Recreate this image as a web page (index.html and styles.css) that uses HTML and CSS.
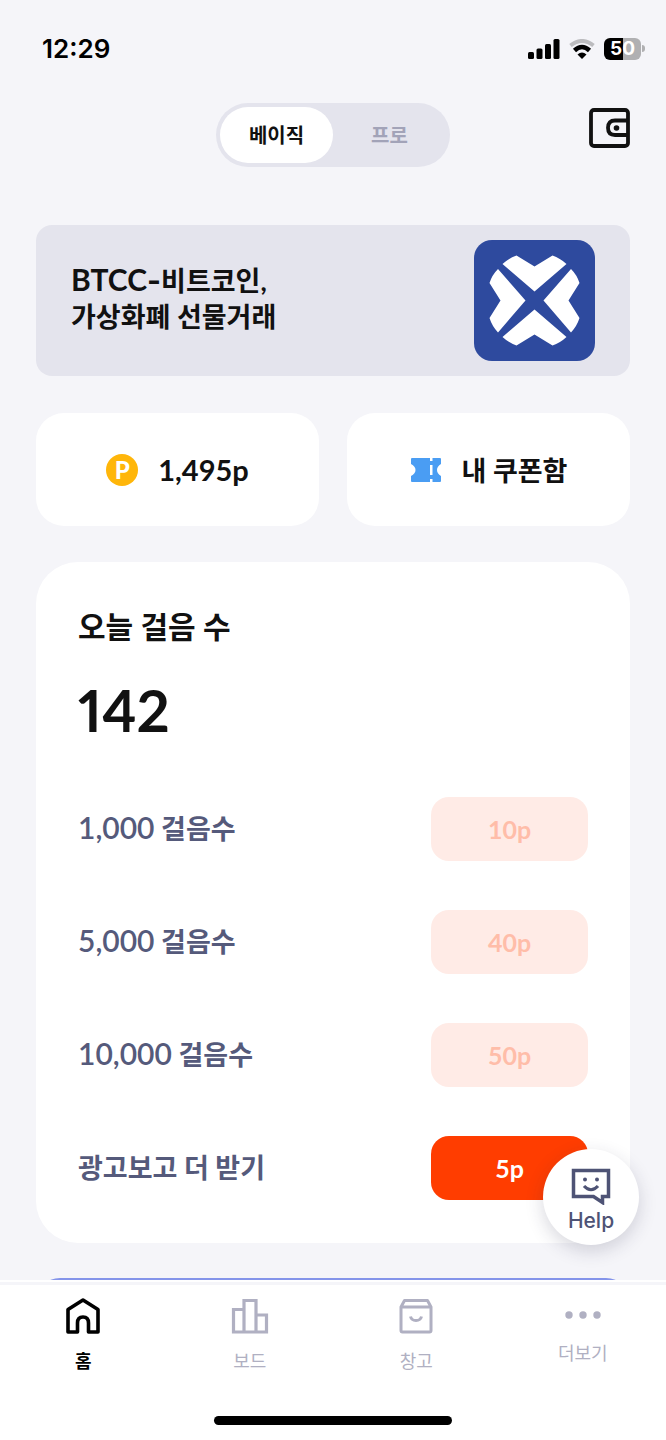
FILE: index.html
```html
<!DOCTYPE html>
<html lang="ko">
<head>
<meta charset="utf-8">
<meta name="viewport" content="width=device-width, initial-scale=1">
<title>홈</title>
<link rel="stylesheet" href="styles.css">
</head>
<body>
<div class="app">
  <div class="status">
    <time class="clock">12:29</time>
    <div class="status-icons">
      <svg width="32" height="20" viewBox="0 0 32 20"><rect x="0" y="13" width="6" height="7" rx="1.5"/><rect x="8.500" y="9.500" width="6" height="10.500" rx="1.500"/><rect x="17" y="5" width="6" height="15" rx="1.500"/><rect x="25.500" y="0" width="6" height="20" rx="1.500"/></svg>
      <svg width="26" height="20" viewBox="0 0 26 20" fill="none"><path d="M1.500 6.500Q13-2.500 24.500 6.500" stroke="#bcbcbf" stroke-width="4"/><path d="M5.500 11.500Q13 4.500 20.500 11.500" stroke="#000" stroke-width="4.500"/><path d="M8.500 15.500Q13 11.500 17.500 15.500L13 20Z" fill="#000"/></svg>
      <div class="battery"><span class="cell">50</span><span class="tip"></span></div>
    </div>
  </div>

  <main class="content">
    <header class="header">
      <div class="toggle">
        <button class="toggle-item active" type="button">베이직</button>
        <button class="toggle-item" type="button">프로</button>
      </div>
      <button class="wallet" type="button" aria-label="지갑">
        <svg width="41" height="40" viewBox="0 0 41 40" fill="none" stroke="#111" stroke-width="3.800"><rect x="2" y="2" width="37" height="36" rx="3"/><path d="M39 12.500H26q-7 0-7 7.250t7 7.250h13"/><circle cx="27.500" cy="20" r="2.800" fill="#111" stroke="none"/></svg>
      </button>
    </header>

    <a class="banner" href="#">
      <span class="banner-text"><span class="brand">BTCC</span><span class="dash">-</span>비트코인,<br>가상화폐 선물거래</span>
      <svg class="banner-logo" width="121" height="121" viewBox="0 0 121 121"><rect width="121" height="121" rx="18" fill="#2e4a9e"/><g fill="#fff"><path d="M28.500 24Q35 18 42.500 15.500L60.500 26.500 78.500 15.500Q86 18 92.500 24L60.500 51.500Z"/><path d="M28.500 97Q35 103 42.500 105.500L60.500 94.500 78.500 105.500Q86 103 92.500 97L60.500 69.500Z"/><path d="M24 29Q18 35 15.500 43L26.500 60.500 15.500 78Q18 86 24 92.500L51.500 60.500Z"/><path d="M97 29Q103 35 105.500 43L94.500 60.500 105.500 78Q103 86 97 92.500L69.500 60.500Z"/></g></svg>
    </a>

    <div class="tiles">
      <a class="tile" href="#"><span class="coin">P</span><span class="points">1,495p</span></a>
      <a class="tile" href="#">
        <svg width="32" height="32" viewBox="0 0 32 32"><path fill="#4a9df3" fill-rule="evenodd" d="M2 4H20V7H22.500V4H30Q31 4 31 5V10Q27 12.500 27 16T31 22V27Q31 28 30 28H22.500V25H20V28H2Q1 28 1 27V22Q5.500 19.500 5.500 16T1 10V5Q1 4 2 4ZM20 11V21H22.500V11Z"/></svg>내 쿠폰함</a>
    </div>

    <section class="steps">
      <h1 class="steps-title">오늘 걸음 수</h1>
      <p class="steps-count">142</p>
      <ul class="goals">
        <li class="goal"><span><span class="num">1,000</span> 걸음수</span><button class="reward" type="button" disabled>10p</button></li>
        <li class="goal"><span><span class="num">5,000</span> 걸음수</span><button class="reward" type="button" disabled>40p</button></li>
        <li class="goal"><span><span class="num">10,000</span> 걸음수</span><button class="reward" type="button" disabled>50p</button></li>
        <li class="goal"><span>광고보고 더 받기</span><button class="reward" type="button">5p</button></li>
      </ul>
    </section>

    <div class="promo"></div>
  </main>

  <div class="dock">
    <button class="help" type="button">
      <svg width="40" height="38" viewBox="0 0 40 38" fill="none" stroke="#4e5375" stroke-width="3.500"><path d="M2.500 3.500H37.500V29.500H31.500V35.500L22.500 29.500H2.500Z"/><path d="M13 19Q20 26.500 27 19" stroke-width="3.200"/><g fill="#4e5375" stroke="none"><circle cx="14" cy="12.500" r="2"/><circle cx="26" cy="12.500" r="2"/></g></svg>
      Help
    </button>
    <nav class="tabs">
      <a class="tab active" href="#"><svg width="36" height="38" viewBox="0 0 36 38" fill="none" stroke="currentColor" stroke-width="3.600" stroke-linejoin="round"><path d="M3 12.500L18 3 33 12.500V35H23.500V26Q23.500 20 18 20T12.500 26V35H3Z"/></svg>홈</a>
      <a class="tab" href="#"><svg width="38" height="38" viewBox="0 0 38 38" fill="none" stroke="currentColor" stroke-width="3.200"><path d="M13 12.500H2.500V35H35.500V18H25M13 35V3.500H25V35"/></svg>보드</a>
      <a class="tab" href="#"><svg width="36" height="38" viewBox="0 0 36 38" fill="none" stroke="currentColor" stroke-width="3" stroke-linejoin="round"><path d="M3 10L6.500 3.500H29.500L33 10V33.500Q33 35 31.500 35H4.500Q3 35 3 33.500ZM3 10H33"/><path d="M12.500 19.500Q13.500 23.500 18 23.500T23.500 19.500"/></svg>창고</a>
      <a class="tab" href="#"><svg width="36" height="30" viewBox="0 0 36 30" fill="currentColor"><circle cx="4" cy="18" r="3.700"/><circle cx="18" cy="18" r="3.700"/><circle cx="32" cy="18" r="3.700"/></svg>더보기</a>
    </nav>
    <div class="home-bar"></div>
  </div>
</div>
</body>
</html>
```
FILE: styles.css
```css
* { box-sizing: border-box; }
body {
  margin: 0;
  background: #f5f5f9;
  color: #111;
  font-family: Lato, "Noto Sans CJK KR", sans-serif;
}
button { border: 0; padding: 0; background: none; color: inherit; font: inherit; }
a { color: inherit; text-decoration: none; }
svg { display: block; flex: none; }

.app { display: flex; flex-direction: column; height: 100vh; }

.status {
  display: flex;
  align-items: center;
  justify-content: space-between;
  height: 97px;
  flex: none;
  padding: 0 21px 0 42px;
  color: #000;
}
.clock { font: 600 26px/32px Inter, sans-serif; }
.status-icons { display: flex; align-items: center; gap: 9px; }
.battery { display: flex; align-items: center; gap: 1px; }
.cell {
  width: 37px;
  border-radius: 6px;
  background: linear-gradient(to right, #000 50%, #b0b0b2 50%);
  color: #fff;
  font: 700 19px/22px Inter, sans-serif;
  text-align: center;
}
.tip { width: 3px; height: 7px; border-radius: 0 3px 3px 0; background: #b0b0b2; }

.content {
  flex: 1;
  min-height: 0;
  overflow-y: auto;
  scrollbar-width: none;
  padding: 6px 36px 0;
}

.header {
  display: grid;
  grid-template-columns: 1fr auto 1fr;
  align-items: start;
}
.toggle {
  grid-column: 2;
  display: grid;
  grid-template-columns: 1fr 1fr;
  width: 234px;
  padding: 4px;
  border-radius: 32px;
  background: #e4e4ed;
}
.toggle-item {
  height: 56px;
  padding-bottom: 2px;
  border-radius: 28px;
  color: #a2a3b8;
  font-size: 20px;
  font-weight: 700;
}
.toggle-item.active { background: #fff; color: #111; }
.wallet { justify-self: end; margin-top: 5px; }

.banner {
  display: flex;
  align-items: center;
  justify-content: space-between;
  margin-top: 58px;
  padding: 15px 35px;
  border-radius: 16px;
  background: #e4e4ed;
}
.banner-text { padding-bottom: 4px; font-size: 27px; line-height: 36px; font-weight: 700; }
.brand { font-size: 30px; line-height: 1; }
.dash { font-family: Inter, sans-serif; font-size: 30px; line-height: 1; }

.tiles { display: grid; grid-template-columns: 1fr 1fr; gap: 28px; margin-top: 37px; }
.tile {
  display: flex;
  align-items: center;
  justify-content: center;
  gap: 20px;
  height: 113px;
  border-radius: 28px;
  background: #fff;
  font-size: 27px;
  font-weight: 700;
}
.points { font-size: 29px; }
.coin {
  width: 32px;
  border-radius: 50%;
  background: #ffb60a;
  color: #fff;
  font-size: 24px;
  line-height: 32px;
  font-weight: 900;
  text-align: center;
}

.steps {
  margin-top: 36px;
  padding: 44px 42px 43px;
  border-radius: 42px;
  background: #fff;
}
.steps-title { margin: 0; font-size: 30px; line-height: 40px; font-weight: 700; }
.steps-count { margin: 28px 0 0; font-size: 58px; line-height: 72px; font-weight: 700; font-variant-numeric: proportional-nums; }
.goals {
  display: grid;
  gap: 49px;
  margin: 51px 0 0;
  padding: 0;
  list-style: none;
}
.goal {
  display: flex;
  align-items: center;
  justify-content: space-between;
  color: #555a7b;
  font-size: 27px;
  line-height: 36px;
  font-weight: 700;
}
.num { font-size: 30px; line-height: 1; font-weight: 600; }
.reward {
  width: 157px;
  height: 64px;
  border-radius: 18px;
  background: #ff3d00;
  color: #fff;
  font-size: 25px;
  font-weight: 700;
}
.reward:disabled { background: #ffebe6; color: #ffbda9; }

.promo { height: 160px; margin-top: 35px; border-radius: 24px; background: #8494ea; }

.dock {
  position: relative;
  flex: none;
  border-top: 2px solid #fff;
  background: #fff;
}
.help {
  position: absolute;
  right: 27px;
  bottom: calc(100% + 37px);
  display: flex;
  flex-direction: column;
  align-items: center;
  justify-content: center;
  gap: 3px;
  width: 96px;
  height: 96px;
  padding-top: 6px;
  border-radius: 50%;
  background: #fff;
  box-shadow: 0 6px 18px rgba(40, 40, 70, 0.18);
  color: #4e5375;
  font: 500 21px/26px Inter, sans-serif;
}
.tabs {
  display: grid;
  grid-template-columns: repeat(4, 1fr);
  padding: 12px 0 0;
  border-top: 3px solid #f5f5f9;
}
.tab {
  display: flex;
  flex-direction: column;
  align-items: center;
  gap: 13px;
  color: #b0b0c2;
  font-size: 18px;
  line-height: 26px;
}
.tab.active { color: #000; font-weight: 700; }
.home-bar {
  width: 238px;
  height: 9px;
  margin: 42px auto 15px;
  border-radius: 5px;
  background: #000;
}
```
